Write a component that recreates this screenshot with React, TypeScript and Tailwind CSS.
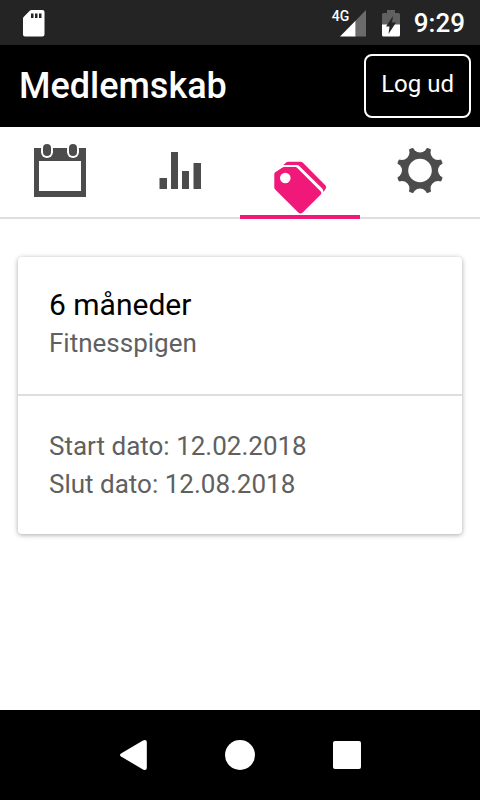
import { useState } from 'react';
import clsx from 'clsx';

const MEMBERSHIP = {
  name: '6 måneder',
  center: 'Fitnesspigen',
  startDate: '12.02.2018',
  endDate: '12.08.2018',
};

const GEAR_ANGLES = [0, 45, 90, 135, 180, 225, 270, 315];

function CalendarIcon() {
  return (
    <svg viewBox="0 0 72 90" className="h-[90px] w-[72px]" fill="currentColor" aria-hidden="true">
      <path fillRule="evenodd" d="M10 21h52v49H10zM15 34v30h42V34z" />
      <rect x="18" y="14" width="10" height="16" rx="5" fill="white" />
      <rect x="44" y="14" width="10" height="16" rx="5" fill="white" />
      <rect x="17" y="16" width="12" height="15" rx="6" fill="white" />
      <rect x="43" y="16" width="12" height="15" rx="6" fill="white" />
      <rect x="19" y="17" width="8" height="12" rx="4" />
      <rect x="45" y="17" width="8" height="12" rx="4" />
    </svg>
  );
}

function StatsIcon() {
  return (
    <svg viewBox="0 0 72 90" className="h-[90px] w-[72px]" fill="currentColor" aria-hidden="true">
      <path d="M15.500 51h7.500v11h-7.500zM27 25h7v37h-7zM38 44h7v18h-7zM49.500 36h7.500v26h-7.500z" />
    </svg>
  );
}

function TagsIcon() {
  return (
    <svg viewBox="0 0 72 90" className="h-[90px] w-[72px]" fill="currentColor" aria-hidden="true">
      <path d="M19.300 38L22.500 35.200Q23.200 34.700 24 34.700H36.500Q37.700 34.700 38.700 35.600L61.500 58.500Q62.800 60 61.800 61.500L59.500 65Q59.300 62.500 58 61.200L34.800 38.400Q34.200 38 33.300 38Z" />
      <path
        fillRule="evenodd"
        d="M20 40H31.500Q32.500 40 33.300 40.900L56.800 64.500Q58 66 56.800 67.500L38.700 85.500Q36.500 87.500 34.300 85.500L11.200 62.500Q10.300 61.700 10.300 60.500V47Q10.300 46 11.200 45.300L18.500 40.400Q19.200 40 20 40ZM21.300 45.700a5.300 5.300 0 1 0 0 10.600a5.300 5.300 0 1 0 0-10.600Z"
      />
    </svg>
  );
}

function GearIcon() {
  return (
    <svg viewBox="0 0 72 90" className="h-[90px] w-[72px]" fill="currentColor" aria-hidden="true">
      <circle cx="36" cy="43.500" r="23.800" />
      {GEAR_ANGLES.map((angle) => (
        <circle key={angle} cx="36" cy="18" r="7.500" fill="white" transform={`rotate(${angle} 36 43.500)`} />
      ))}
      <circle cx="36" cy="43.500" r="11.800" fill="white" />
    </svg>
  );
}

const TABS = [
  { id: 'calendar', label: 'Kalender', Icon: CalendarIcon },
  { id: 'stats', label: 'Statistik', Icon: StatsIcon },
  { id: 'membership', label: 'Medlemskab', Icon: TagsIcon },
  { id: 'settings', label: 'Indstillinger', Icon: GearIcon },
];

function StatusBar() {
  return (
    <div className="flex h-[45px] items-center justify-between bg-[#242424] pr-[15px] pl-[22px] text-white">
      <svg viewBox="0 0 24 28" className="h-7 w-6" aria-hidden="true">
        <path
          fill="white"
          d="M9.500 1H20.500Q22.500 1 22.500 3V25.500Q22.500 27.500 20.500 27.500H3Q1 27.500 1 25.500V9.500Q1 8.700 1.600 8.100L8 1.600Q8.700 1 9.500 1Z"
        />
        <path fill="#242424" d="M9 4.500h2.500v4.500H9zM13 4.500h2.500v4.500H13zM17 4.500h2.500v4.500H17z" />
      </svg>
      <div className="flex items-center">
        <div className="relative">
          <span className="absolute top-0 -left-2 text-[14px] leading-[14px] font-medium">4G</span>
          <svg viewBox="0 0 26 28" className="h-7 w-[26px]" aria-hidden="true">
            <path fill="#6b6b6b" d="M26 1V27.500H15.500V11.700z" />
            <path fill="white" d="M15.500 11.700V27.500H0z" />
          </svg>
        </div>
        <svg viewBox="0 0 18 28" className="ml-4 h-7 w-[18px]" aria-hidden="true">
          <path fill="#606060" d="M5 1h8v3h3.500q1.500 0 1.500 1.500V16H0V5.500Q0 4 1.500 4H5z" />
          <path fill="white" d="M0 15.500h18v10.500q0 1.500-1.500 1.500h-15Q0 27.500 0 26z" />
          <path fill="#242424" d="M11 7L4 17.500H7.500L6.500 25L14 13.500H10z" />
        </svg>
        <span className="ml-3.5 text-[26px] leading-8 font-medium">9:29</span>
      </div>
    </div>
  );
}

function MembershipCard() {
  return (
    <section className="rounded-[4px] bg-white shadow-[0_1px_5px_rgba(0,0,0,0.35)]">
      <div className="border-b-2 border-[#dedede] px-[31px] pt-[29px] pb-8">
        <h2 className="text-[30px] leading-[38px] text-black">{MEMBERSHIP.name}</h2>
        <p>{MEMBERSHIP.center}</p>
      </div>
      <div className="px-[31px] py-[31px]">
        <p>Start dato: {MEMBERSHIP.startDate}</p>
        <p>Slut dato: {MEMBERSHIP.endDate}</p>
      </div>
    </section>
  );
}

function NavigationBar() {
  return (
    <div className="flex h-[90px] items-center justify-center gap-[75px] bg-black">
      <button type="button" aria-label="Tilbage">
        <svg viewBox="0 0 32 32" className="size-8" fill="white" aria-hidden="true">
          <path d="M4 14.500L26 1.500Q29.500 0 29.800 3V29Q29.500 32 26 30.500L4 17.500Q2 16 4 14.500Z" />
        </svg>
      </button>
      <button type="button" aria-label="Hjem">
        <svg viewBox="0 0 32 32" className="size-8" fill="white" aria-hidden="true">
          <circle cx="16" cy="16" r="15" />
        </svg>
      </button>
      <button type="button" aria-label="Oversigt">
        <svg viewBox="0 0 32 32" className="size-8" fill="white" aria-hidden="true">
          <rect x="2" y="2" width="28" height="28" rx="2" />
        </svg>
      </button>
    </div>
  );
}

export default function App() {
  const [activeTab, setActiveTab] = useState('membership');

  return (
    <div className="flex min-h-screen flex-col bg-white font-['Roboto',sans-serif]">
      <StatusBar />

      <header className="flex h-[82px] items-center justify-between bg-black pr-[9px] pl-[19px] text-white">
        <h1 className="text-[36px] leading-[44px] font-medium">Medlemskab</h1>
        <button type="button" className="h-16 rounded-lg border-2 border-white px-[15px] pb-1 text-[24px]">
          Log ud
        </button>
      </header>

      <nav className="grid grid-cols-4">
        {TABS.map(({ id, label, Icon }) => (
          <button
            key={id}
            type="button"
            aria-label={label}
            onClick={() => setActiveTab(id)}
            className={clsx(
              'relative flex justify-center border-b-2',
              activeTab === id ? 'border-[#f01878] text-[#f01878]' : 'border-[#dedede] text-[#4c4c4c]'
            )}
          >
            <Icon />
            {activeTab === id && <span className="absolute inset-x-0 bottom-0 h-0.5 bg-[#f01878]" />}
          </button>
        ))}
      </nav>

      <main className="flex-1 px-[18px] pt-[38px] text-[26px] leading-[38px] text-[#606060]">
        <MembershipCard />
      </main>

      <NavigationBar />
    </div>
  );
}
